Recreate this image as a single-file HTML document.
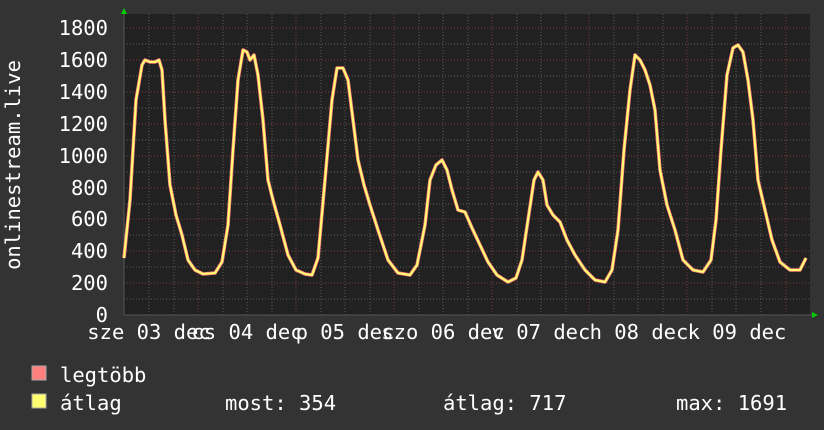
<!DOCTYPE html>
<html><head><meta charset="utf-8"><style>
html,body{margin:0;padding:0;background:#333;}
svg{display:block}
text{font-family:"DejaVu Sans Mono","Liberation Mono",monospace;fill:#fff;}
</style></head><body>
<svg width="824" height="430" xmlns="http://www.w3.org/2000/svg">
<rect width="824" height="430" fill="#333"/>
<rect x="124" y="14" width="686" height="301" fill="#212121"/>
<g id="grid" stroke-dasharray="1,2" stroke-width="1">
<g stroke="#5a5a5a">
<line x1="124" x2="810" y1="299" y2="299"/><line x1="124" x2="810" y1="267" y2="267"/>
<line x1="124" x2="810" y1="235" y2="235"/><line x1="124" x2="810" y1="204" y2="204"/>
<line x1="124" x2="810" y1="172" y2="172"/><line x1="124" x2="810" y1="140" y2="140"/>
<line x1="124" x2="810" y1="108" y2="108"/><line x1="124" x2="810" y1="76" y2="76"/>
<line x1="124" x2="810" y1="44" y2="44"/>
<line y1="14" y2="315" x1="149" x2="149"/><line y1="14" y2="315" x1="174" x2="174"/>
<line y1="14" y2="315" x1="223" x2="223"/><line y1="14" y2="315" x1="247" x2="247"/><line y1="14" y2="315" x1="272" x2="272"/>
<line y1="14" y2="315" x1="321" x2="321"/><line y1="14" y2="315" x1="345" x2="345"/><line y1="14" y2="315" x1="370" x2="370"/>
<line y1="14" y2="315" x1="419" x2="419"/><line y1="14" y2="315" x1="443" x2="443"/><line y1="14" y2="315" x1="468" x2="468"/>
<line y1="14" y2="315" x1="517" x2="517"/><line y1="14" y2="315" x1="541" x2="541"/><line y1="14" y2="315" x1="566" x2="566"/>
<line y1="14" y2="315" x1="614" x2="614"/><line y1="14" y2="315" x1="638" x2="638"/><line y1="14" y2="315" x1="663" x2="663"/>
<line y1="14" y2="315" x1="712" x2="712"/><line y1="14" y2="315" x1="736" x2="736"/><line y1="14" y2="315" x1="761" x2="761"/>
</g>
<g stroke="#7a3a3a">
<line x1="124" x2="810" y1="283" y2="283"/><line x1="124" x2="810" y1="251" y2="251"/>
<line x1="124" x2="810" y1="219" y2="219"/><line x1="124" x2="810" y1="188" y2="188"/>
<line x1="124" x2="810" y1="156" y2="156"/><line x1="124" x2="810" y1="124" y2="124"/>
<line x1="124" x2="810" y1="92" y2="92"/><line x1="124" x2="810" y1="60" y2="60"/>
<line x1="124" x2="810" y1="28" y2="28"/>
<line y1="14" y2="315" x1="198" x2="198"/><line y1="14" y2="315" x1="296" x2="296"/>
<line y1="14" y2="315" x1="394" x2="394"/><line y1="14" y2="315" x1="492" x2="492"/>
<line y1="14" y2="315" x1="589" x2="589"/><line y1="14" y2="315" x1="687" x2="687"/>
<line y1="14" y2="315" x1="786" x2="786"/>
</g></g>
<line x1="124" y1="315" x2="812" y2="315" stroke="#555"/>
<line x1="124" y1="12" x2="124" y2="315" stroke="#555"/>
<polygon points="121,14 127,14 124,8" fill="#0c0"/>
<polygon points="812,312 812,318 818,315" fill="#0c0"/>
<polyline fill="none" stroke-linejoin="round" stroke="#ff7f7f" stroke-width="3.5" points="124,258 130,200 136,100 142,65 145,60 150,62 155,62 159,60 162,70 165,120 170,185 176,215 182,235 188,260 195,270 203,274 215,273 222,262 228,225 233,150 238,80 243,50 247,52 250,60 254,55 258,75 263,120 268,180 273,200 280,225 288,255 296,270 305,274 312,275 318,258 325,180 332,100 337,68 343,68 348,80 353,120 358,160 364,185 370,205 378,230 388,260 398,273 410,275 417,265 425,225 430,180 436,165 442,160 447,170 452,190 458,210 465,212 472,228 480,245 488,262 497,275 508,282 516,278 522,260 528,220 534,180 538,172 543,180 547,205 553,215 560,222 567,240 575,255 585,270 595,280 605,282 612,270 618,230 624,150 630,90 635,55 640,60 645,70 650,85 655,110 660,170 667,205 675,230 683,260 693,270 703,272 711,260 716,220 721,150 727,75 733,48 738,45 743,52 748,80 753,120 758,180 765,210 772,240 780,262 790,270 800,270 806,258"/>
<polyline fill="none" stroke-linejoin="round" stroke="#ffff70" stroke-width="2" points="124,258 130,200 136,100 142,65 145,60 150,62 155,62 159,60 162,70 165,120 170,185 176,215 182,235 188,260 195,270 203,274 215,273 222,262 228,225 233,150 238,80 243,50 247,52 250,60 254,55 258,75 263,120 268,180 273,200 280,225 288,255 296,270 305,274 312,275 318,258 325,180 332,100 337,68 343,68 348,80 353,120 358,160 364,185 370,205 378,230 388,260 398,273 410,275 417,265 425,225 430,180 436,165 442,160 447,170 452,190 458,210 465,212 472,228 480,245 488,262 497,275 508,282 516,278 522,260 528,220 534,180 538,172 543,180 547,205 553,215 560,222 567,240 575,255 585,270 595,280 605,282 612,270 618,230 624,150 630,90 635,55 640,60 645,70 650,85 655,110 660,170 667,205 675,230 683,260 693,270 703,272 711,260 716,220 721,150 727,75 733,48 738,45 743,52 748,80 753,120 758,180 765,210 772,240 780,262 790,270 800,270 806,258"/>
<g font-size="20.5" text-anchor="end">
<text x="108" y="322">0</text><text x="108" y="290">200</text><text x="108" y="258">400</text>
<text x="108" y="226">600</text><text x="108" y="195">800</text><text x="108" y="163">1000</text>
<text x="108" y="131">1200</text><text x="108" y="99">1400</text><text x="108" y="67">1600</text>
<text x="108" y="35">1800</text>
</g>
<text transform="translate(20,165) rotate(-90)" font-size="20.5" text-anchor="middle">onlinestream.live</text>
<g font-size="20.5" text-anchor="middle">
<text x="149" y="339">sze 03 dec</text><text x="247" y="339">cs 04 dec</text>
<text x="345" y="339">p 05 dec</text><text x="443" y="339">szo 06 dec</text>
<text x="541" y="339">v 07 dec</text><text x="639" y="339">h 08 dec</text>
<text x="737" y="339">k 09 dec</text>
</g>
<rect x="32" y="366" width="14" height="14" fill="#ff7f7f" stroke="#aaa"/>
<rect x="32" y="394" width="14" height="14" fill="#ffff70" stroke="#aaa"/>
<g font-size="20.5">
<text x="60" y="382">legtöbb</text>
<text x="60" y="410">átlag</text>
<text x="225" y="410">most: 354</text>
<text x="443" y="410">átlag: 717</text>
<text x="676" y="410">max: 1691</text>
</g>
</svg>
</body></html>
